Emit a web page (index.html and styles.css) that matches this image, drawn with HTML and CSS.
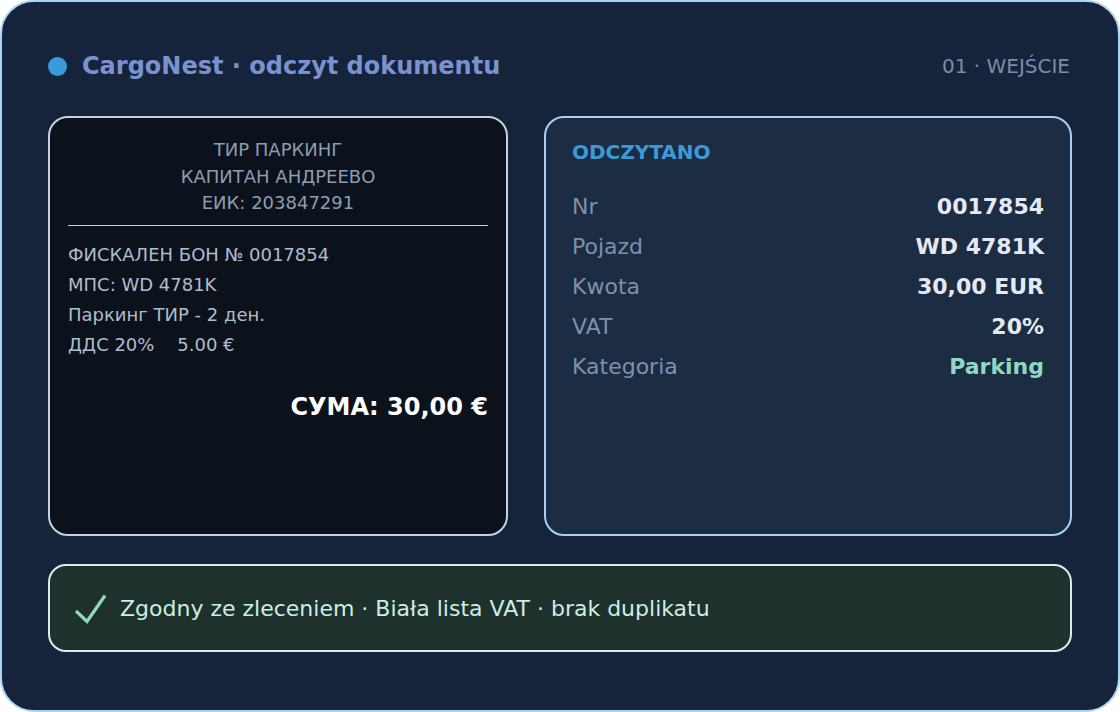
FILE: index.html
```html
<!DOCTYPE html>
<html lang="pl">
<head>
<meta charset="utf-8">
<title>CargoNest · odczyt dokumentu</title>
<link rel="stylesheet" href="styles.css">
</head>
<body>
<main class="frame">
  <header class="top">
    <div class="brand">
      <span class="dot"></span>
      <h1 class="title">CargoNest · odczyt dokumentu</h1>
    </div>
    <div class="step">01 · WEJŚCIE</div>
  </header>

  <section class="panels">
    <article class="receipt">
      <div class="receipt-head">
        <div>ТИР ПАРКИНГ</div>
        <div>КАПИТАН АНДРЕЕВО</div>
        <div>ЕИК: 203847291</div>
      </div>
      <hr class="rule">
      <div class="receipt-body">
        <div>ФИСКАЛЕН БОН № 0017854</div>
        <div>МПС: WD 4781K</div>
        <div>Паркинг ТИР - 2 ден.</div>
        <div>ДДС 20%&nbsp;&nbsp;&nbsp;&nbsp;5.00 €</div>
      </div>
      <div class="receipt-total">СУМА: 30,00 €</div>
    </article>

    <article class="parsed">
      <h2 class="parsed-title">ODCZYTANO</h2>
      <dl class="fields">
        <div class="field"><dt>Nr</dt><dd>0017854</dd></div>
        <div class="field"><dt>Pojazd</dt><dd>WD 4781K</dd></div>
        <div class="field"><dt>Kwota</dt><dd>30,00 EUR</dd></div>
        <div class="field"><dt>VAT</dt><dd>20%</dd></div>
        <div class="field"><dt>Kategoria</dt><dd class="accent">Parking</dd></div>
      </dl>
    </article>
  </section>

  <footer class="status">
    <svg class="check" width="34" height="32" viewBox="0 0 34 32" aria-hidden="true">
      <path d="M2 18 L13 28.5 L31 2.5" fill="none" stroke="#8fd9c2" stroke-width="3.2" stroke-linejoin="miter"/>
    </svg>
    <span class="status-text">Zgodny ze zleceniem · Biała lista VAT · brak duplikatu</span>
  </footer>
</main>
</body>
</html>
```

FILE: styles.css
```css
* {
  box-sizing: border-box;
}

html, body {
  margin: 0;
  padding: 0;
  background: #ffffff;
}

body {
  font-family: "DejaVu Sans", "Liberation Sans", sans-serif;
  width: 1120px;
  height: 712px;
}

.frame {
  width: 1120px;
  height: 712px;
  border: 2px solid #a9d3f0;
  border-radius: 34px;
  background: #16243b;
  padding: 48px 46px 0 46px;
  display: flex;
  flex-direction: column;
}

/* header line */
.top {
  height: 32px;
  display: flex;
  align-items: center;
  justify-content: space-between;
}

.brand {
  display: flex;
  align-items: center;
  gap: 15px;
}

.dot {
  width: 19px;
  height: 19px;
  border-radius: 50%;
  background: #3a9bd9;
}

.title {
  margin: 0;
  font-size: 24px;
  line-height: 32px;
  font-weight: bold;
  color: #7a92d0;
}

.step {
  font-size: 20px;
  line-height: 32px;
  color: #7d8ca6;
  margin-right: 2px;
}

/* two cards */
.panels {
  margin-top: 34px;
  height: 420px;
  display: grid;
  grid-template-columns: 460px 1fr;
  gap: 36px;
}

.receipt {
  background: #0b121c;
  border: 2px solid #c8d1dd;
  border-radius: 20px;
  padding: 19px 18px 0 18px;
  display: flex;
  flex-direction: column;
}

.receipt-head {
  text-align: center;
  font-size: 18px;
  line-height: 26.5px;
  color: #8f9db2;
}

.rule {
  margin: 8px 0 0 0;
  border: 0;
  border-top: 1px solid #c8d1dd;
  height: 0;
}

.receipt-body {
  margin-top: 14px;
  font-size: 18px;
  line-height: 30px;
  color: #b1bdcd;
}

.receipt-total {
  margin-top: 32px;
  text-align: right;
  font-size: 24px;
  line-height: 30px;
  font-weight: bold;
  color: #ffffff;
}

.parsed {
  background: #1b2c43;
  border: 2px solid #a8d2ef;
  border-radius: 20px;
  padding: 22px 26px 0 26px;
}

.parsed-title {
  margin: 0;
  font-size: 20px;
  line-height: 24px;
  font-weight: bold;
  color: #3b9ad7;
}

.fields {
  margin: 22px 0 0 0;
}

.field {
  display: flex;
  justify-content: space-between;
  align-items: center;
  height: 40px;
}

.field dt {
  font-size: 22px;
  color: #7e91ab;
}

.field dd {
  margin: 0;
  font-size: 22px;
  font-weight: bold;
  color: #e4e9f4;
}

.field dd.accent {
  color: #8fd9c2;
}

/* verification bar */
.status {
  margin-top: 28px;
  height: 88px;
  background: #1e312d;
  border: 2px solid #d1f2e8;
  border-radius: 18px;
  padding: 0 24px;
  display: flex;
  align-items: center;
  gap: 12px;
}

.check {
  flex: none;
  margin-top: 2px;
}

.status-text {
  font-size: 22px;
  color: #cdeee2;
}
```
